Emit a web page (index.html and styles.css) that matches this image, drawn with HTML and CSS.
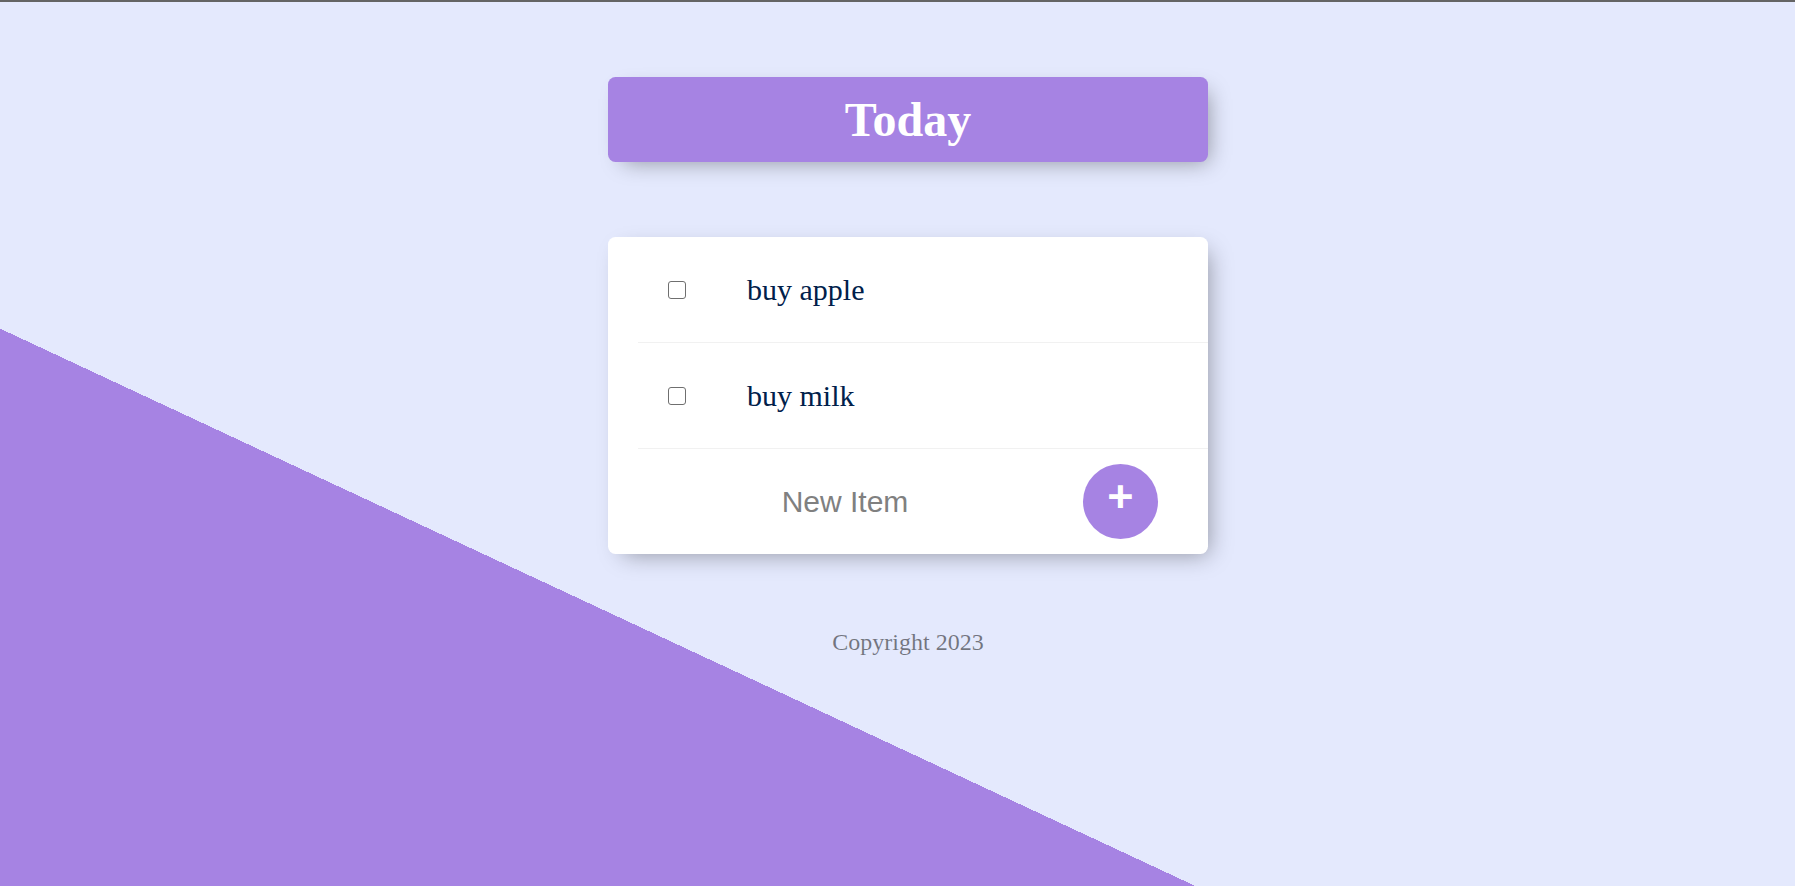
FILE: index.html
```html
<!DOCTYPE html>
<html lang="en">
<head>
<meta charset="utf-8">
<title>Today</title>
<link rel="stylesheet" href="styles.css">
</head>
<body>
  <div class="box heading">
    <h1>Today</h1>
  </div>
  <div class="box">
    <form class="list">
      <div class="item">
        <input type="checkbox" class="check">
        <p>buy apple</p>
      </div>
      <div class="item">
        <input type="checkbox" class="check">
        <p>buy milk</p>
      </div>
    </form>
    <form class="item new-item">
      <input type="text" class="new-input" placeholder="New Item" autocomplete="off">
      <button type="submit" class="add-btn">+</button>
    </form>
  </div>
  <footer class="footer">Copyright 2023</footer>
</body>
</html>
```

FILE: styles.css
```css
html {
  width: 1816px;
  min-height: 1500px;
  overflow: hidden;
  border-top: 2px solid #646464;
  background-color: #E4E9FD;
  background-image: linear-gradient(25deg, #A683E3 50%, #E4E9FD 50%);
  background-repeat: no-repeat;
  font-family: "Liberation Serif", "Times New Roman", serif;
}

body {
  margin: 0 12px;
  padding: 0;
}

.box {
  width: 600px;
  margin: 75px auto;
  background: #ffffff;
  border-radius: 7.5px;
  box-shadow: 7.5px 7.5px 22.5px -7.5px rgba(0, 0, 0, 0.38);
}

.heading {
  background-color: #A683E3;
  text-align: center;
}

.heading h1 {
  margin: 0;
  padding: 15px;
  color: #ffffff;
  font-size: 48px;
  font-weight: bold;
  line-height: normal;
}

.list {
  margin: 0 0 0 30px;
}

.item {
  min-height: 105px;
  display: flex;
  align-items: center;
  border-bottom: 1px solid #F1F1F1;
}

.check {
  appearance: none;
  -webkit-appearance: none;
  box-sizing: border-box;
  width: 18px;
  height: 18px;
  margin: 0 31px 0 30px;
  border: 1.5px solid #6f6f6f;
  border-radius: 3px;
  background: #ffffff;
  flex: 0 0 auto;
}

.item p {
  margin: 0;
  padding: 30px;
  font-size: 30px;
  font-weight: 200;
  color: #00204a;
}

.new-item {
  margin: 0 0 0 30px;
  border-bottom: 0;
}

.new-input {
  box-sizing: border-box;
  width: 414px;
  height: 90px;
  padding: 0;
  border: none;
  outline: none;
  background: transparent;
  text-align: center;
  font-family: "Liberation Sans", Arial, sans-serif;
  font-size: 30px;
  font-weight: 200;
  color: #00204a;
}

.new-input::placeholder {
  color: grey;
  opacity: 1;
}

.add-btn {
  box-sizing: border-box;
  width: 75px;
  height: 75px;
  margin-left: 31px;
  padding: 0 0 9px 0;
  border: 0;
  border-radius: 50%;
  background-color: #A683E3;
  color: #ffffff;
  font-family: "Liberation Sans", Arial, sans-serif;
  font-size: 45px;
  font-weight: bold;
  line-height: normal;
}

.footer {
  color: rgba(0, 0, 0, 0.5);
  text-align: center;
  font-size: 24px;
}
```
